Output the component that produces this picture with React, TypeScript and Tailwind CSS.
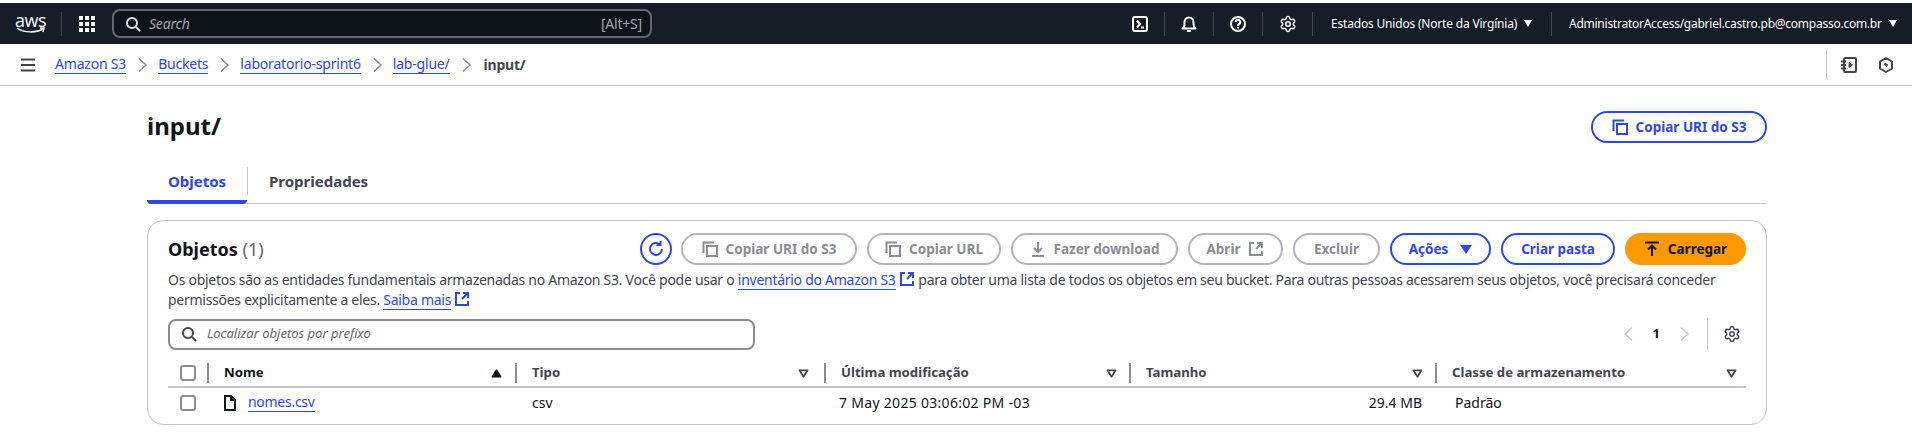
import React from 'react';
import { Settings } from 'lucide-react';

type IconProps = { className?: string };

const CopyIcon = ({ className = '' }: IconProps) => (
    <svg viewBox="0 0 16 16" fill="none" stroke="currentColor" strokeWidth="2" className={`w-4 h-4 shrink-0 ${className}`}>
        <path d="M1.500 12V1.500H12" />
        <rect x="5" y="5" width="10" height="10" />
    </svg>
);

const ExternalIcon = ({ className = '' }: IconProps) => (
    <svg viewBox="0 0 16 16" fill="none" stroke="currentColor" strokeWidth="2" className={`w-4 h-4 shrink-0 ${className}`}>
        <path d="M6 2H2v12h12v-4" />
        <path d="M9 2h5v5M14 2 8 8" />
    </svg>
);

const SortCaret = ({ filled = false }: { filled?: boolean }) => (
    <svg viewBox="0 0 12 10" className={`w-[11px] h-[9px] shrink-0 ${filled ? 'text-[#0f141a] rotate-180' : 'text-[#424650]'}`}>
        <path d="M1.500 1.500h9L6 8.500z" fill={filled ? 'currentColor' : 'none'} stroke="currentColor" strokeWidth="2" strokeLinejoin="round" />
    </svg>
);

const Divider = ({ className = '' }: IconProps) => <span className={`w-0.5 h-5 bg-[#8c8c94] shrink-0 ${className}`} />;

const Checkbox = () => <span className="block w-[16px] h-[16px] rounded-[3px] border-2 border-[#8c8c94] bg-white" />;

const Link = ({ children }: { children: React.ReactNode }) => (
    <a className="text-[#3046e8] border-b border-[#3046e8] leading-[18px] inline-block">{children}</a>
);

const Chevron = () => (
    <svg viewBox="0 0 16 16" fill="none" stroke="#8c8c94" strokeWidth="1.500" className="w-4 h-4 shrink-0">
        <path d="m5 1.500 7 6.500-7 6.500" />
    </svg>
);

const ActionButton = ({ label, icon, width, disabled, after }: { label: string; icon?: React.ReactNode; width: string; disabled?: boolean; after?: boolean }) => (
    <button className={`${width} h-8 rounded-full border-2 flex items-center justify-center gap-2 text-[13.5px] font-bold ${disabled ? 'border-[#b4b4bb] text-[#8c8c94]' : 'border-[#3046e8] text-[#3046e8]'}`}>
        {!after && icon}
        <span>{label}</span>
        {after && icon}
    </button>
);

const HeaderIcon = ({ children, width = 'w-[49px]' }: { children: React.ReactNode; width?: string }) => (
    <div className={`${width} h-[24px] flex items-center justify-center border-r border-[#424650] text-white`}>{children}</div>
);

const columns = 'grid grid-cols-[39px_308px_309px_305px_306px_311px] w-[1578px]';

const HeadCell = ({ label, active, caretGap }: { label: string; active?: boolean; caretGap: string }) => (
    <div className="flex items-center h-8">
        <Divider className="mr-[15px]" />
        <span className={`grow font-bold text-[13.2px] ${active ? 'text-[#0f141a]' : 'text-[#424650]'}`}>{label}</span>
        <span className={caretGap}><SortCaret filled={active} /></span>
    </div>
);

export default function App() {
    return (
        <div className="w-[1912px] h-[444px] overflow-hidden bg-white font-['Noto_Sans',sans-serif] text-[#0f141a]">
            <div className="h-[3px] bg-white" />

            {/* Top navigation */}
            <header className="h-[41px] bg-[#161d26] flex items-center text-white">
                <div className="w-[62px] h-[24px] flex flex-col items-center justify-center border-r border-[#424650]">
                    <span className="text-[18px] leading-[14px] font-['Open_Sans',sans-serif] tracking-tight">aws</span>
                    <svg viewBox="0 0 30 8" className="w-[30px] h-[8px]" fill="none" stroke="white" strokeWidth="1.500">
                        <path d="M1 1c7 5 19 5 26 1M24 1h4l-1 4" />
                    </svg>
                </div>
                <div className="w-[16px] h-[16px] grid grid-cols-3 gap-[2px] ml-[17px]">
                    {Array.from({ length: 9 }).map((_, i) => <span key={i} className="bg-white" />)}
                </div>
                <div className="ml-[17px] w-[540px] h-[29px] rounded-lg border-2 border-[#656871] bg-[#0f141a] flex items-center pl-[11px] pr-[8px]">
                    <svg viewBox="0 0 16 16" fill="none" stroke="#dedee3" strokeWidth="2" className="w-4 h-4">
                        <circle cx="7" cy="7" r="5" /><path d="m11 11 4 4" />
                    </svg>
                    <span className="ml-[8px] grow italic text-[14px] tracking-[-0.2px] text-[#a4a4ad]">Search</span>
                    <span className="text-[14px] tracking-[-0.2px] text-[#a4a4ad]">[Alt+S]</span>
                </div>
                <div className="grow" />
                <HeaderIcon>
                    <svg viewBox="0 0 16 16" fill="none" stroke="currentColor" strokeWidth="2" className="w-4 h-4">
                        <rect x="1" y="1" width="14" height="14" rx="2" /><path d="m5 4.500 3 3.500-3 3.500M9 11.500h3" />
                    </svg>
                </HeaderIcon>
                <HeaderIcon>
                    <svg viewBox="0 0 16 16" fill="none" stroke="currentColor" strokeWidth="2" strokeLinejoin="round" className="w-4 h-4">
                        <path d="M1.500 12.500c1.500-1 2-2.500 2-4.500V6a4.500 4.500 0 0 1 9 0v2c0 2 .5 3.500 2 4.500zM6 15h4" />
                    </svg>
                </HeaderIcon>
                <HeaderIcon>
                    <svg viewBox="0 0 16 16" fill="none" stroke="currentColor" strokeWidth="2" className="w-4 h-4">
                        <circle cx="8" cy="8" r="7" /><path d="M5.800 6a2.200 2.200 0 1 1 3.300 1.900C8.300 8.400 8 8.800 8 10M8 11v1.600" />
                    </svg>
                </HeaderIcon>
                <HeaderIcon width="w-[50px]"><Settings size={18} strokeWidth={2} /></HeaderIcon>
                <div className="w-[239px] h-[24px] pl-[18px] flex items-center gap-[7px] border-r border-[#424650] text-[12px] tracking-[-0.19px]">
                    <span>Estados Unidos (Norte da Virgínia)</span>
                    <span className="w-0 h-0 border-x-[4px] border-x-transparent border-t-[7px] border-t-white" />
                </div>
                <div className="w-[360px] pl-[17px] flex items-center gap-[7px] text-[12px] tracking-[-0.25px]">
                    <span>AdministratorAccess/gabriel.castro.pb@compasso.com.br</span>
                    <span className="w-0 h-0 border-x-[4px] border-x-transparent border-t-[7px] border-t-white" />
                </div>
            </header>

            {/* Breadcrumb bar */}
            <nav className="h-[42px] border-b border-[#c6c6cd] flex items-center pl-[20px] text-[14px] tracking-[-0.2px]">
                <svg viewBox="0 0 16 16" fill="none" stroke="#424650" strokeWidth="2" className="w-4 h-4 mr-[19px]">
                    <path d="M1 2.500h14M1 8h14M1 13.500h14" />
                </svg>
                <div className="flex items-center gap-[8px]">
                    <Link>Amazon S3</Link><Chevron />
                    <Link>Buckets</Link><Chevron />
                    <Link>laboratorio-sprint6</Link><Chevron />
                    <Link>lab-glue/</Link><Chevron />
                    <span className="ml-[2px] font-bold text-[#424650]">input/</span>
                </div>
                <div className="grow" />
                <div className="h-[29px] w-[15px] border-l border-[#c6c6cd]" />
                <svg viewBox="0 0 16 16" fill="none" stroke="#424650" strokeWidth="2" strokeLinejoin="round" className="w-4 h-4 mr-[21px]">
                    <rect x="3" y="1" width="12" height="14" rx="1" /><path d="M0 4.500h5M0 8h5M0 11.500h5" />
                    <path d="M8 5.500 11.500 8 8 10.500z" fill="#424650" strokeWidth="1" />
                </svg>
                <svg viewBox="0 0 16 16" fill="none" stroke="#424650" strokeWidth="2" strokeLinejoin="round" className="w-4 h-4 mr-[18px]">
                    <path d="M8 1l6 3.500v7L8 15l-6-3.500v-7z" /><path d="M6.500 6.500 9.500 9" strokeWidth="2.500" />
                </svg>
            </nav>

            <main className="pl-[147px] pr-[145px]">
                <div className="flex items-center justify-between h-[32px] mt-[25px]">
                    <h1 className="text-[24px] leading-[32px] font-bold -mt-[2px]">input/</h1>
                    <button className="w-[176px] h-8 rounded-full border-2 border-[#3046e8] text-[#3046e8] flex items-center justify-center gap-2 text-[13.5px] font-bold">
                        <CopyIcon />Copiar URI do S3
                    </button>
                </div>

                {/* Tabs */}
                <div className="mt-[21px] h-[40px] border-b border-[#c6c6cd] flex">
                    <div className="w-[100px] h-[40px] pt-[4px] flex justify-center border-b-4 border-[#3046e8] rounded-b-sm font-bold text-[15px] text-[#3046e8] leading-[26px]">Objetos</div>
                    <div className="w-[1px] h-7 bg-[#c6c6cd] mt-[3px]" />
                    <div className="ml-[21px] pt-[4px] font-bold text-[15px] text-[#424650] leading-[26px]">Propriedades</div>
                </div>

                {/* Objects card */}
                <section className="mt-[16px] h-[205px] border border-[#c6c6cd] rounded-2xl pt-[12px] px-[20px]">
                    <div className="flex items-center h-8">
                        <h2 className="text-[18px] font-bold grow leading-8">Objetos <span className="font-normal text-[#656871]">(1)</span></h2>
                        <button className="w-8 h-8 rounded-full border-2 border-[#3046e8] text-[#3046e8] flex items-center justify-center mr-[9px]">
                            <svg viewBox="0 0 16 16" fill="none" stroke="currentColor" strokeWidth="2" className="w-4 h-4">
                                <path d="M14 8a6 6 0 1 1-2-4.500M12.500 0v4h-4" />
                            </svg>
                        </button>
                        <div className="flex gap-[10px]">
                            <ActionButton label="Copiar URI do S3" icon={<CopyIcon />} width="w-[176px]" disabled />
                            <ActionButton label="Copiar URL" icon={<CopyIcon />} width="w-[134px]" disabled />
                            <ActionButton label="Fazer download" width="w-[167px]" disabled icon={
                                <svg viewBox="0 0 16 16" fill="none" stroke="currentColor" strokeWidth="2" className="w-4 h-4"><path d="M8 1v9M4 7l4 4 4-4M2 15h12" /></svg>
                            } />
                            <ActionButton label="Abrir" icon={<ExternalIcon />} width="w-[95px]" disabled after />
                            <ActionButton label="Excluir" width="w-[87px]" disabled />
                            <ActionButton label="Ações" width="w-[101px]" after icon={<span className="w-0 h-0 border-x-[6px] border-x-transparent border-t-[9px] border-t-[#3046e8] ml-1" />} />
                            <ActionButton label="Criar pasta" width="w-[114px]" />
                            <button className="w-[121px] h-8 rounded-full bg-[#ff9900] flex items-center justify-center gap-2 text-[13.5px] font-bold text-[#0f141a]">
                                <svg viewBox="0 0 16 16" fill="none" stroke="currentColor" strokeWidth="2" className="w-4 h-4"><path d="M1 1.500h14M8 15V5M4 8.500l4-4 4 4" /></svg>
                                Carregar
                            </button>
                        </div>
                    </div>
                    <p className="mt-[5px] text-[14px] leading-[20px] tracking-[-0.27px] text-[#424650] w-[1570px]">
                        Os objetos são as entidades fundamentais armazenadas no Amazon S3. Você pode usar o <Link>inventário do Amazon S3</Link> <ExternalIcon className="inline-block text-[#3046e8] align-[-2px]" /> para obter uma lista de todos os objetos em seu bucket. Para outras pessoas acessarem seus objetos, você precisará conceder permissões explicitamente a eles. <Link>Saiba mais</Link> <ExternalIcon className="inline-block text-[#3046e8] align-[-2px]" />
                    </p>

                    {/* Filter + pagination */}
                    <div className="flex items-center mt-[8px] h-8">
                        <div className="w-[587px] h-[31px] rounded-lg border-2 border-[#8c8c94] flex items-center pl-[11px]">
                            <svg viewBox="0 0 16 16" fill="none" stroke="#424650" strokeWidth="2" className="w-4 h-4">
                                <circle cx="7" cy="7" r="5" /><path d="m11 11 4 4" />
                            </svg>
                            <span className="ml-[10px] italic text-[13px] text-[#656871]">Localizar objetos por prefixo</span>
                        </div>
                        <div className="grow" />
                        <div className="flex items-center text-[#c6c6cd]">
                            <svg viewBox="0 0 16 16" fill="none" stroke="currentColor" strokeWidth="1.500" className="w-4 h-4"><path d="m11 1.500-7 6.500 7 6.500" /></svg>
                            <span className="mx-[16px] text-[13px] font-bold text-[#0f141a]">1</span>
                            <svg viewBox="0 0 16 16" fill="none" stroke="currentColor" strokeWidth="1.500" className="w-4 h-4"><path d="m5 1.500 7 6.500-7 6.500" /></svg>
                        </div>
                        <div className="w-px h-8 bg-[#c6c6cd] mx-[15px]" />
                        <Settings size={18} strokeWidth={2} className="text-[#424650] mr-[5px]" />
                    </div>

                    {/* Table */}
                    <div className={`${columns} mt-[7px] h-[31px] border-b-2 border-[#c6c6cd] items-center`}>
                        <div className="pl-[12px]"><Checkbox /></div>
                        <HeadCell label="Nome" active caretGap="mr-[13px]" />
                        <HeadCell label="Tipo" caretGap="mr-[15px]" />
                        <HeadCell label="Última modificação" caretGap="mr-[12px]" />
                        <HeadCell label="Tamanho" caretGap="mr-[12px]" />
                        <HeadCell label="Classe de armazenamento" caretGap="mr-[9px]" />
                    </div>
                    <div className={`${columns} h-[29px] items-center text-[14px]`}>
                        <div className="pl-[12px]"><Checkbox /></div>
                        <div className="pl-[17px] flex items-center gap-[12px] tracking-[-0.28px]">
                            <svg viewBox="0 0 12 16" fill="none" stroke="#0f141a" strokeWidth="2" className="w-3 h-4"><path d="M1 1v14h10V5L7 1zM7 1v4h4" /></svg>
                            <Link>nomes.csv</Link>
                        </div>
                        <div className="pl-[17px]">csv</div>
                        <div className="pl-[15px] tracking-[0.3px]">7 May 2025 03:06:02 PM -03</div>
                        <div className="text-right pr-[13px]">29.4 MB</div>
                        <div className="pl-[20px]">Padrão</div>
                    </div>
                </section>
            </main>
        </div>
    );
}
